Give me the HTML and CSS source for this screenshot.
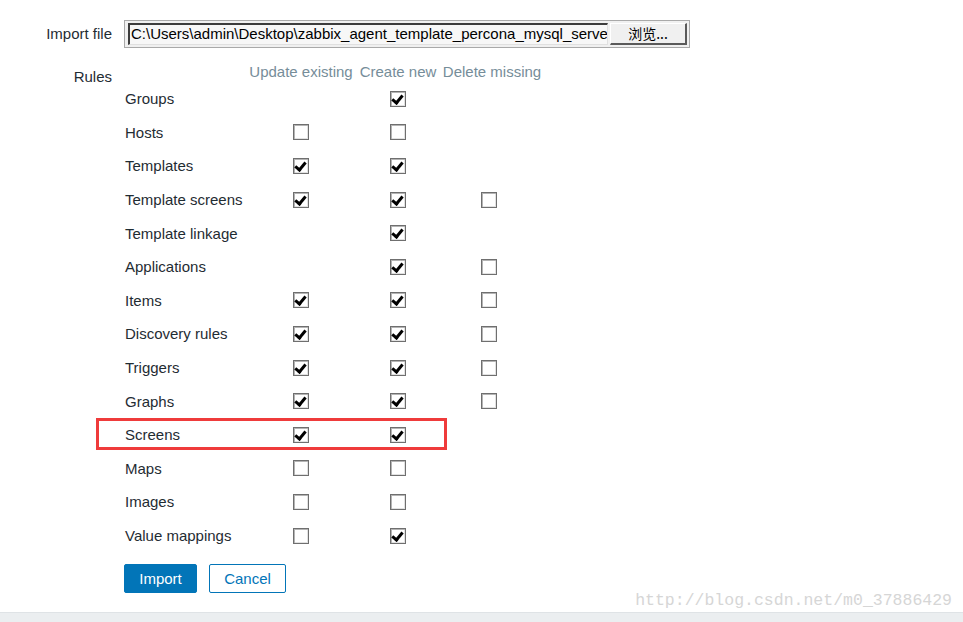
FILE: index.html
```html
<!DOCTYPE html>
<html lang="en">
<head>
<meta charset="utf-8">
<title>Import</title>
<link rel="stylesheet" href="styles.css">
</head>
<body>
<div class="page">
  <main class="main">
    <div class="form-row file-row">
      <div class="label">Import file</div>
      <div class="file">
        <div class="file-path">C:\Users\admin\Desktop\zabbix_agent_template_percona_mysql_serve</div>
        <div class="file-btn">浏览...</div>
      </div>
    </div>
    <div class="form-row rules-row">
      <div class="label rules-label">Rules</div>
      <div class="rules">
        <div class="rrow head">
          <span></span><span class="h">Update existing</span><span class="h">Create new</span><span class="h">Delete missing</span>
        </div>
        <div class="rrow"><span class="name">Groups</span><span></span><span class="cb on"></span><span></span></div>
        <div class="rrow"><span class="name">Hosts</span><span class="cb"></span><span class="cb"></span><span></span></div>
        <div class="rrow"><span class="name">Templates</span><span class="cb on"></span><span class="cb on"></span><span></span></div>
        <div class="rrow"><span class="name">Template screens</span><span class="cb on"></span><span class="cb on"></span><span class="cb d"></span></div>
        <div class="rrow"><span class="name">Template linkage</span><span></span><span class="cb on"></span><span></span></div>
        <div class="rrow"><span class="name">Applications</span><span></span><span class="cb on"></span><span class="cb d"></span></div>
        <div class="rrow"><span class="name">Items</span><span class="cb on"></span><span class="cb on"></span><span class="cb d"></span></div>
        <div class="rrow"><span class="name">Discovery rules</span><span class="cb on"></span><span class="cb on"></span><span class="cb d"></span></div>
        <div class="rrow"><span class="name">Triggers</span><span class="cb on"></span><span class="cb on"></span><span class="cb d"></span></div>
        <div class="rrow"><span class="name">Graphs</span><span class="cb on"></span><span class="cb on"></span><span class="cb d"></span></div>
        <div class="rrow marked"><span class="name">Screens</span><span class="cb on"></span><span class="cb on"></span><span></span></div>
        <div class="rrow"><span class="name">Maps</span><span class="cb"></span><span class="cb"></span><span></span></div>
        <div class="rrow"><span class="name">Images</span><span class="cb"></span><span class="cb"></span><span></span></div>
        <div class="rrow"><span class="name">Value mappings</span><span class="cb"></span><span class="cb on"></span><span></span></div>
      </div>
    </div>
    <div class="form-row buttons">
      <div class="label"></div>
      <div class="btns">
        <button class="btn primary">Import</button>
        <button class="btn secondary">Cancel</button>
      </div>
    </div>
  </main>
  <footer class="footer"></footer>
  <div class="watermark">http://blog.csdn.net/m0_37886429</div>
</div>
</body>
</html>
```
FILE: styles.css
```css
html, body {
  margin: 0;
  padding: 0;
  background: #ffffff;
}
body {
  font-family: "Liberation Sans", Arial, sans-serif;
  font-size: 15px;
  color: #1f2c33;
}
.page {
  position: relative;
  height: 622px;
  display: flex;
  flex-direction: column;
  overflow: hidden;
}
.main {
  flex: 1;
  padding-top: 20px;
}
.form-row {
  display: flex;
  gap: 12px;
}
.label {
  width: 112px;
  flex: none;
  text-align: right;
  line-height: 20px;
}
.file-row {
  align-items: center;
  height: 28px;
}
.file {
  width: 566px;
  height: 28px;
  box-sizing: border-box;
  border: 1px solid #a9a9a9;
  background: #f0f0f0;
  padding: 2px 2px 2px 3px;
  display: flex;
  gap: 2px;
}
.file-path {
  width: 480px;
  flex: none;
  box-sizing: border-box;
  border-style: solid;
  border-width: 2px 1px 1px 2px;
  border-color: #3c3c3c #e0e0e0 #e0e0e0 #3c3c3c;
  background: #f7f7f7;
  white-space: nowrap;
  overflow: hidden;
  line-height: 18px;
  padding-left: 1px;
  font-size: 15px;
  color: #000;
}
.file-btn {
  flex: 1;
  box-sizing: border-box;
  border-style: solid;
  border-width: 1px 2px 2px 1px;
  border-color: #ffffff #5a5a5a #5a5a5a #ffffff;
  background: #f0f0f0;
  text-align: center;
  line-height: 19px;
  font-family: "Noto Sans CJK SC", sans-serif;
  font-size: 14px;
  color: #000;
}
.rules-row {
  margin-top: 14px;
  align-items: flex-start;
}
.rules-label {
  padding-top: 5px;
}
.rules {
  display: flex;
  flex-direction: column;
}
.rrow {
  display: grid;
  grid-template-columns: 124px 106px 88px 100px;
  align-items: center;
  height: 33.6px;
}
.rrow.head {
  height: 20px;
  color: #768d99;
  line-height: 20px;
}
.rrow.head .h {
  text-align: center;
  white-space: nowrap;
}
.name {
  padding-left: 1px;
}
.cb {
  justify-self: center;
  width: 16px;
  height: 16px;
  box-sizing: border-box;
  border: 1px solid #6f6f6f;
  box-shadow: inset 1px 1px 0 #b4b4b4, inset -1px -1px 0 #e2e2e2;
  background: #ffffff;
  position: relative;
}
.cb.d {
  margin-right: 7px;
}
.cb.on::after {
  content: "";
  position: absolute;
  left: 3px;
  top: 1px;
  width: 4px;
  height: 8px;
  border-right: 3px solid #000;
  border-bottom: 3px solid #000;
  transform: rotate(40deg);
  transform-origin: center;
}
.rrow.marked {
  position: relative;
}
.rrow.marked::before {
  content: "";
  position: absolute;
  left: -28px;
  top: 0;
  width: 351px;
  height: 32px;
  box-sizing: border-box;
  border: 3px solid #ef3b3b;
}
.buttons {
  margin-top: 12px;
}
.btns {
  display: flex;
  gap: 12px;
}
.btn {
  height: 29px;
  box-sizing: border-box;
  border-radius: 2px;
  font-family: "Liberation Sans", Arial, sans-serif;
  font-size: 15px;
  padding: 0;
  cursor: pointer;
}
.btn.primary {
  width: 73px;
  background: #0275b8;
  border: 1px solid #0275b8;
  color: #ffffff;
}
.btn.secondary {
  width: 77px;
  background: #ffffff;
  border: 1px solid #0275b8;
  color: #0275b8;
}
.footer {
  height: 10px;
  flex: none;
  background: #ebeef0;
  border-top: 1px solid #dfe3e6;
  box-sizing: border-box;
}
.watermark {
  position: absolute;
  right: 11px;
  bottom: 11px;
  font-family: "Liberation Mono", "DejaVu Sans Mono", monospace;
  font-size: 16.5px;
  line-height: 20px;
  color: #d6d6d6;
}
```
